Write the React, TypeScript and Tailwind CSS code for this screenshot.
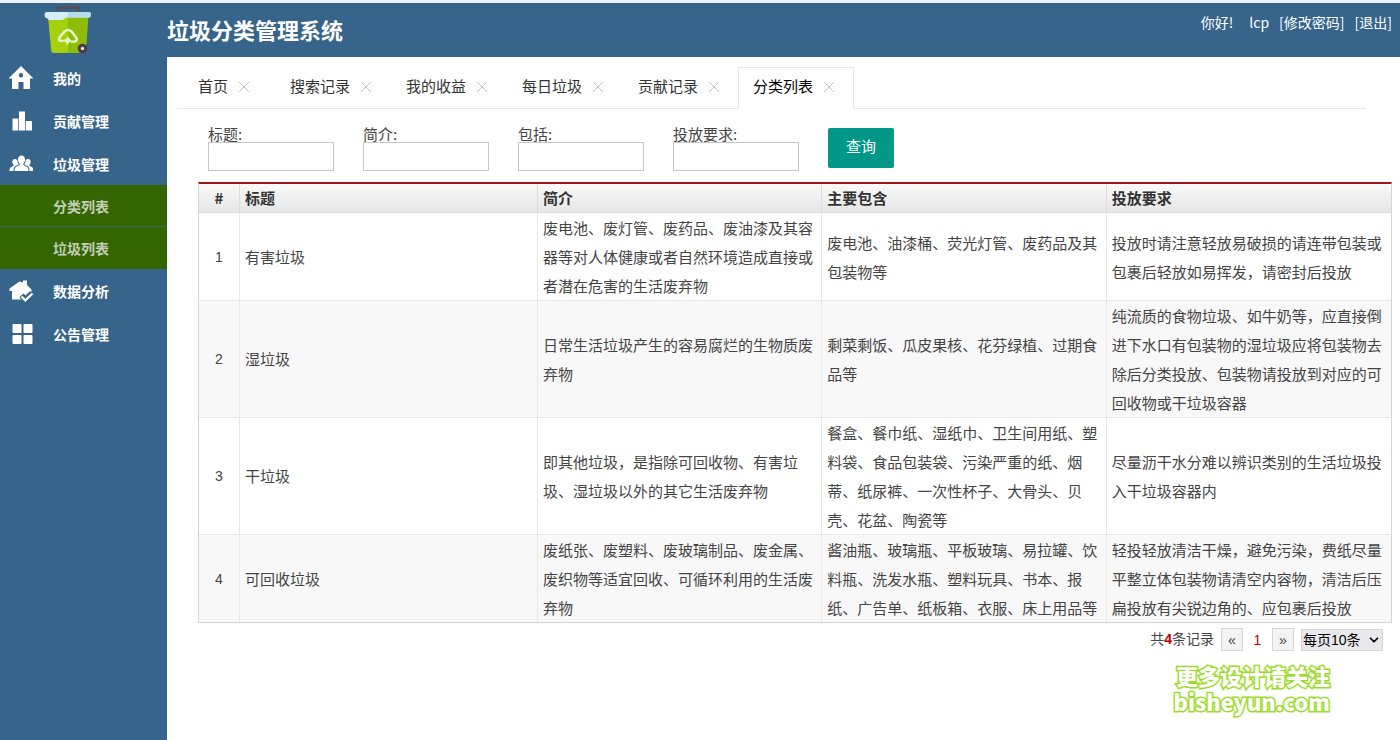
import { ChevronDown } from "lucide-react";
import type { ReactNode } from "react";

type MenuItem = {
  label: string;
  icon: ReactNode;
  children?: string[];
};

type Category = {
  title: string;
  intro: string;
  includes: string;
  requirement: string;
};

function BinLogo() {
  return (
    <svg viewBox="0 0 48 50" className="h-[50px] w-12" aria-hidden="true">
      <path d="M14 7V5Q14 3.500 16 3.500H32Q34.500 3.500 34.500 5.500V8" fill="none" stroke="#5a4f58" strokeWidth="3" />
      <path d="M4 12H24V49H10Q7.500 49 7.200 46.500Z" fill="#a5d010" />
      <path d="M24 12H44.500L42 46.500Q41.700 49 39.500 49H24Z" fill="#8fbc08" />
      <path d="M3 8H45Q47 8 47 10.500Q47 13.500 44.500 13.500H22Q20 16 17.500 16H6Q4 16 3.500 14.500Q.500 13.500 .500 11Q.500 8 3 8Z" fill="#d3eef8" />
      <path d="M24 8H45Q47 8 47 10.500Q47 13.500 44.500 13.500H24Z" fill="#b5dcea" />
      <path
        d="M18 37L15.500 36.500Q14.500 35.500 15.500 33.500L20.500 27.500Q24 24.500 27.500 27.500L32.500 34Q33.500 37 30.500 37.500L28 37.800"
        fill="none"
        stroke="#e6f5c4"
        strokeWidth="2.600"
        strokeLinecap="round"
      />
      <path d="M17.500 36.500L23 34.500V32L27.500 36.500L22.500 41.500V38.500Z" fill="#e6f5c4" />
      <circle cx="38.500" cy="44.500" r="4.800" fill="#4a3d45" />
      <circle cx="38.500" cy="44.500" r="1.700" fill="#e8e4e6" />
    </svg>
  );
}

function HomeIcon() {
  return (
    <svg viewBox="0 0 24 24" className="size-6" fill="currentColor" fillRule="evenodd" aria-hidden="true">
      <path d="M12 0L24.500 12.500H21V23H14.500V16H9.500V23H3V12.500H-.500ZM12 7A2.200 2.200 0 1 0 12 11.400A2.200 2.200 0 1 0 12 7Z" />
    </svg>
  );
}

function BarsIcon() {
  return (
    <svg viewBox="0 0 24 24" className="size-6" fill="currentColor" aria-hidden="true">
      <path d="M3.500 9.500H9.300V21.500H3.500ZM10 2.500H16V21.500H10ZM16.700 12H23V21.500H16.700Z" />
    </svg>
  );
}

function PeopleIcon() {
  return (
    <svg viewBox="0 0 24 24" className="size-6" fill="currentColor" aria-hidden="true">
      <path d="M12.500 3.500C14.800 3.500 16 5.300 16 7.500C16 9.300 15.300 10.700 14.400 11.700V13L18.500 15.200Q19.500 16 19.500 19H5.500Q5.500 16 6.500 15.200L10.600 13V11.700C9.700 10.700 9 9.300 9 7.500C9 5.300 10.200 3.500 12.500 3.500Z" />
      <path d="M6 7C7.200 7 8.100 7.500 8.400 8.700C8.500 10.300 9.100 11.500 9.700 12.400L5.700 14.600Q4.500 15.600 4.400 19H.500Q.200 16 1.500 15.400L4.500 13.700V12.700C3.700 12 3.300 11 3.300 9.800C3.300 8.200 4.400 7 6 7Z" />
      <path d="M19 7C17.800 7 16.900 7.500 16.600 8.700C16.500 10.300 15.900 11.500 15.300 12.400L19.300 14.600Q20.500 15.600 20.600 19H24.500Q24.800 16 23.500 15.400L20.500 13.700V12.700C21.300 12 21.700 11 21.700 9.800C21.700 8.200 20.600 7 19 7Z" />
    </svg>
  );
}

function HouseCheckIcon() {
  return (
    <svg viewBox="0 0 24 24" className="size-6 overflow-visible" fill="currentColor" aria-hidden="true">
      <path d="M10.500 2.500L14 3.500V1.500H18V6L22.500 10.500V12.500H20.500L16.500 16.500L14.500 14.500L10.500 18L12 20.500H3V12H.500V9.500Z" />
      <path d="M12.500 17.500L16.300 21.300L23.500 14.500" fill="none" stroke="currentColor" strokeWidth="2.400" />
    </svg>
  );
}

function GridIcon() {
  return (
    <svg viewBox="0 0 24 24" className="size-6" fill="currentColor" aria-hidden="true">
      <rect x="3.500" y="2" width="9" height="9" rx="1" />
      <rect x="14.500" y="2" width="9" height="9" rx="1" />
      <rect x="3.500" y="13" width="9" height="9" rx="1" />
      <rect x="14.500" y="13" width="9" height="9" rx="1" />
    </svg>
  );
}

const menu: MenuItem[] = [
  { label: "我的", icon: <HomeIcon /> },
  { label: "贡献管理", icon: <BarsIcon /> },
  { label: "垃圾管理", icon: <PeopleIcon />, children: ["分类列表", "垃圾列表"] },
  { label: "数据分析", icon: <HouseCheckIcon /> },
  { label: "公告管理", icon: <GridIcon /> },
];

const tabs = ["首页", "搜索记录", "我的收益", "每日垃圾", "贡献记录", "分类列表"];
const activeTab = "分类列表";

const filters = [
  { name: "title", label: "标题:" },
  { name: "intro", label: "简介:" },
  { name: "includes", label: "包括:" },
  { name: "requirement", label: "投放要求:" },
];

const categories: Category[] = [
  {
    title: "有害垃圾",
    intro: "废电池、废灯管、废药品、废油漆及其容器等对人体健康或者自然环境造成直接或者潜在危害的生活废弃物",
    includes: "废电池、油漆桶、荧光灯管、废药品及其包装物等",
    requirement: "投放时请注意轻放易破损的请连带包装或包裹后轻放如易挥发，请密封后投放",
  },
  {
    title: "湿垃圾",
    intro: "日常生活垃圾产生的容易腐烂的生物质废弃物",
    includes: "剩菜剩饭、瓜皮果核、花芬绿植、过期食品等",
    requirement:
      "纯流质的食物垃圾、如牛奶等，应直接倒进下水口有包装物的湿垃圾应将包装物去除后分类投放、包装物请投放到对应的可回收物或干垃圾容器",
  },
  {
    title: "干垃圾",
    intro: "即其他垃圾，是指除可回收物、有害垃圾、湿垃圾以外的其它生活废弃物",
    includes:
      "餐盒、餐巾纸、湿纸巾、卫生间用纸、塑料袋、食品包装袋、污染严重的纸、烟蒂、纸尿裤、一次性杯子、大骨头、贝壳、花盆、陶瓷等",
    requirement: "尽量沥干水分难以辨识类别的生活垃圾投入干垃圾容器内",
  },
  {
    title: "可回收垃圾",
    intro: "废纸张、废塑料、废玻璃制品、废金属、废织物等适宜回收、可循环利用的生活废弃物",
    includes: "酱油瓶、玻璃瓶、平板玻璃、易拉罐、饮料瓶、洗发水瓶、塑料玩具、书本、报纸、广告单、纸板箱、衣服、床上用品等",
    requirement: "轻投轻放清洁干燥，避免污染，费纸尽量平整立体包装物请清空内容物，清洁后压扁投放有尖锐边角的、应包裹后投放",
  },
];

function Sidebar() {
  return (
    <aside className="w-[167px] shrink-0 text-sm font-bold text-white">
      <div className="flex h-[53px] items-start pt-px pl-11">
        <BinLogo />
      </div>
      <nav>
        {menu.map((item) => (
          <div key={item.label}>
            <a href="#" className="flex h-[43px] items-center gap-5 pl-[9px]">
              {item.icon}
              {item.label}
            </a>
            {item.children && (
              <div className="divide-y divide-[#3b6a5c] bg-[#336600] text-[#c3cdb8]">
                {item.children.map((child) => (
                  <a key={child} href="#" className="flex h-[42px] items-center pl-[53px]">
                    {child}
                  </a>
                ))}
              </div>
            )}
          </div>
        ))}
      </nav>
    </aside>
  );
}

function TabBar() {
  return (
    <div className="mr-[34px] ml-[10px] flex h-[42px] border-b border-[#e6e6e6] pl-[5px]">
      {tabs.map((tab) => (
        <div
          key={tab}
          className={
            tab === activeTab
              ? "-mb-px flex min-w-[92px] items-center gap-2 border border-b-0 border-[#e6e6e6] bg-white pr-4 pb-1 pl-[14px] text-black"
              : "flex min-w-[92px] items-center gap-2 pr-4 pb-0.5 pl-4 text-[#333]"
          }
        >
          <a href="#">{tab}</a>
          <button type="button" aria-label={`关闭${tab}`} className="flex w-4 justify-center text-[#c2c2c2]">
            <svg viewBox="0 0 12 12" className="size-3" fill="none" stroke="currentColor" aria-hidden="true">
              <path d="M1 1L11 11M11 1L1 11" />
            </svg>
          </button>
        </div>
      ))}
    </div>
  );
}

function FilterForm() {
  return (
    <form className="flex gap-[29px] pt-4 pb-[11px] pl-[41px]">
      {filters.map((filter) => (
        <div key={filter.name} className="flex w-[126px] flex-col">
          <label htmlFor={filter.name} className="leading-[17px]">
            {filter.label}
          </label>
          <input id={filter.name} name={filter.name} type="text" className="h-[29px] border border-[#c6c6c6] px-1 outline-none" />
        </div>
      ))}
      <button type="button" className="mt-[3px] h-10 w-[66px] rounded-xs bg-[#009688] pb-[3px] text-white">
        查询
      </button>
    </form>
  );
}

function CategoryTable() {
  return (
    <table className="w-full table-fixed border-separate border-spacing-0 border-t-2 border-r border-b border-l border-[#d5d5d5] border-t-[#a01818] text-left leading-[29px]">
      <thead>
        <tr className="bg-linear-to-b from-[#f9f9f9] to-[#e6e6e6] leading-7 text-[#333]">
          <th className="w-[41px] border-r border-b border-[#dcdcdc] text-center">#</th>
          <th className="w-1/4 border-r border-b border-[#dcdcdc] px-[5px]">标题</th>
          <th className="border-r border-b border-[#dcdcdc] px-[5px]">简介</th>
          <th className="border-r border-b border-[#dcdcdc] px-[5px]">主要包含</th>
          <th className="border-b border-[#dcdcdc] px-[5px]">投放要求</th>
        </tr>
      </thead>
      <tbody className="[&_td]:border-[#e8e8e8] [&_tr:not(:last-child)>td]:border-b">
        {categories.map((category, index) => (
          <tr key={category.title} className="even:bg-[#f8f8f8]">
            <td className="border-r text-center font-['Liberation_Sans',sans-serif] text-sm leading-7">{index + 1}</td>
            <td className="border-r px-[5px] leading-7">{category.title}</td>
            <td className="border-r px-[5px]">{category.intro}</td>
            <td className="border-r px-[5px]">{category.includes}</td>
            <td className="px-[5px]">{category.requirement}</td>
          </tr>
        ))}
      </tbody>
    </table>
  );
}

function Pagination() {
  return (
    <div className="flex items-center justify-end gap-[7px] pt-[5px] pr-[9px] font-['Liberation_Sans','Noto_Sans_CJK_SC',sans-serif] text-sm">
      <span className="pb-0.5">
        共<b className="text-[#c00000]">4</b>条记录
      </span>
      <button type="button" aria-label="上一页" className="h-[23px] w-[22px] border border-[#d5d5d5] bg-[#f3f3f3] leading-none">
        «
      </button>
      <span className="w-[15px] text-center text-[#c00000]">1</span>
      <button type="button" aria-label="下一页" className="h-[23px] w-[22px] border border-[#d5d5d5] bg-[#f3f3f3] leading-none">
        »
      </button>
      <div className="relative">
        <select
          aria-label="每页条数"
          className="block h-[22px] w-[82px] appearance-none border border-[#d5d5d5] bg-[#e9e9ed] pl-px text-sm leading-5 text-black outline-none"
        >
          <option>每页10条</option>
          <option>每页20条</option>
          <option>每页50条</option>
        </select>
        <ChevronDown className="pointer-events-none absolute top-1 right-0.5 size-[14px] text-black" strokeWidth={3} />
      </div>
    </div>
  );
}

export default function App() {
  return (
    <div className="flex min-h-screen flex-col border-t-[3px] border-[#edf4f8] bg-[#36648b] font-['Noto_Sans_CJK_SC',sans-serif] text-[15px] text-[#444]">
      <div className="flex flex-1">
        <Sidebar />
        <div className="flex min-w-0 flex-1 flex-col">
          <header className="flex h-[54px] items-start justify-between pr-2 text-white">
            <h1 className="pt-[10px] text-[22px] leading-8 font-bold">垃圾分类管理系统</h1>
            <div className="flex gap-[10px] pt-[9px] text-sm">
              <span className="mr-[6px]">你好!</span>
              <span>lcp</span>
              <a href="#">[修改密码]</a>
              <a href="#">[退出]</a>
            </div>
          </header>
          <main className="flex-1 bg-white pt-[10px]">
            <TabBar />
            <FilterForm />
            <div className="pr-2 pl-[31px]">
              <CategoryTable />
              <Pagination />
            </div>
            <div className="mt-[11px] mr-[70px] text-right text-[22px] leading-[26px] font-black text-white [-webkit-text-stroke:3px_#9bdc28] [paint-order:stroke]">
              <p>更多设计请关注</p>
              <p>bisheyun.com</p>
            </div>
          </main>
        </div>
      </div>
    </div>
  );
}
